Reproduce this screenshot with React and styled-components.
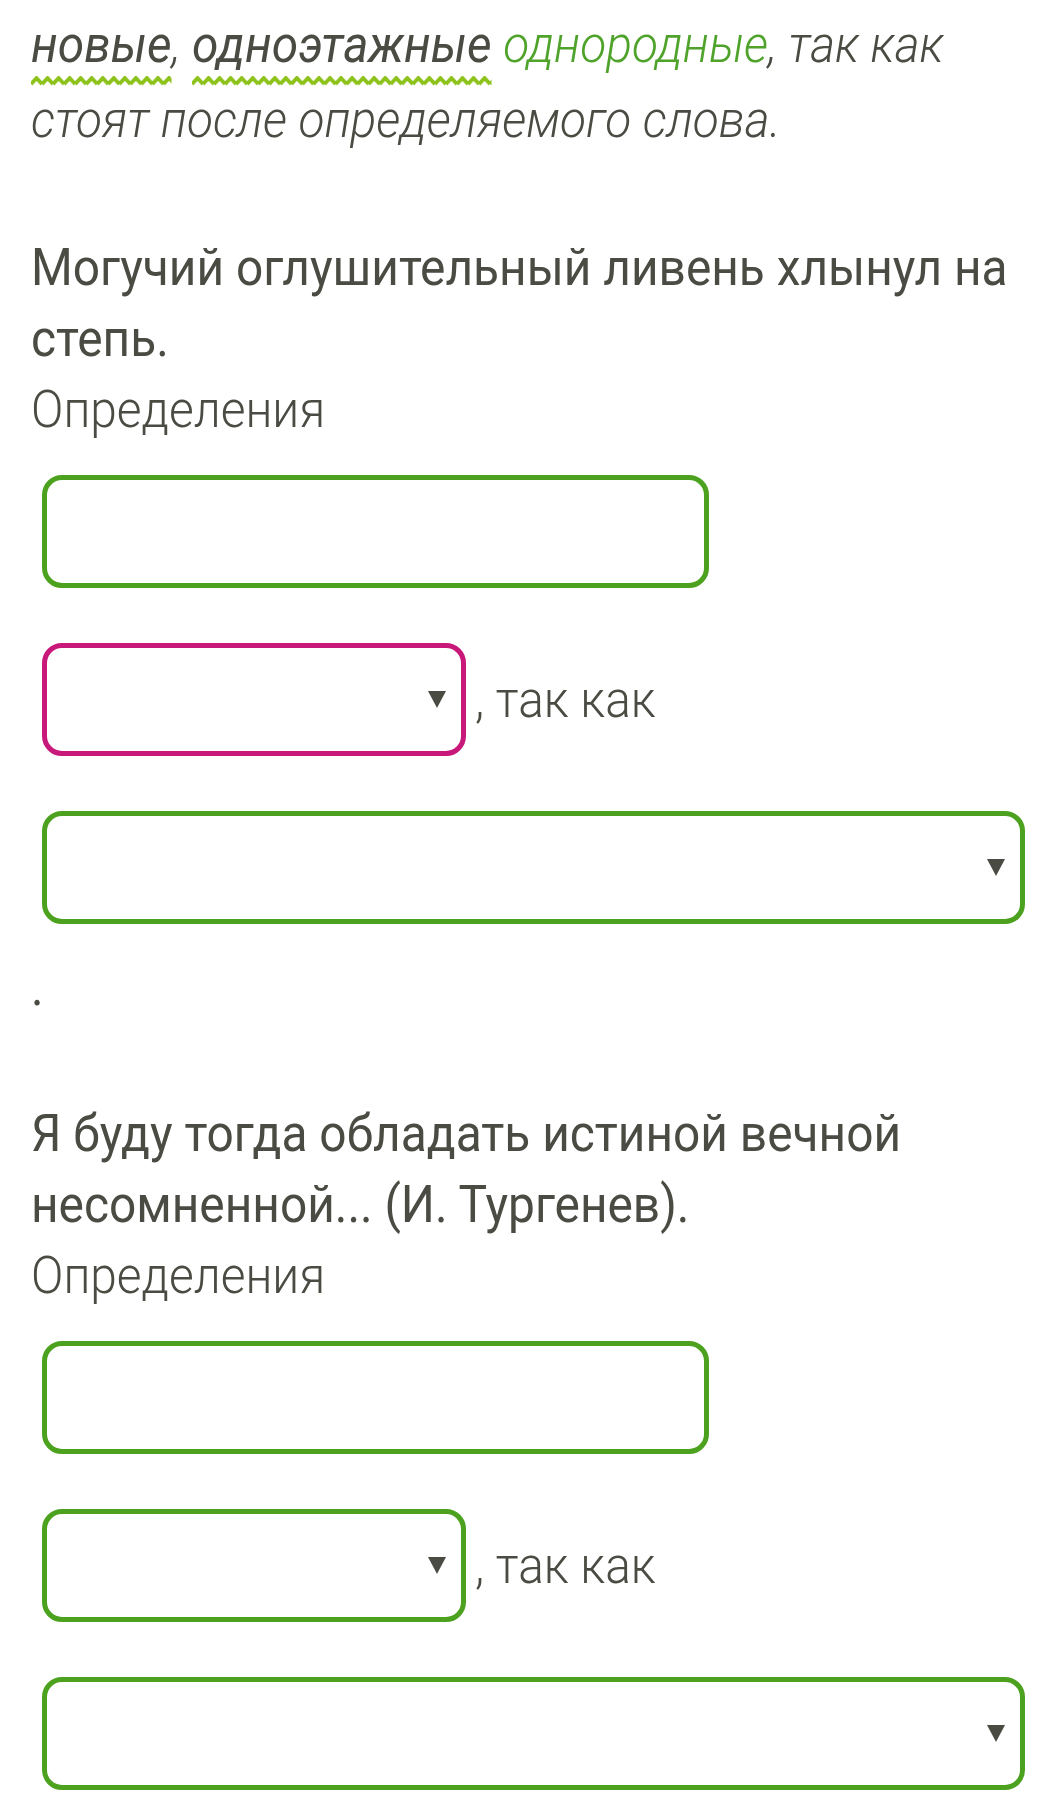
import React from 'react';
import styled, { createGlobalStyle, css } from 'styled-components';

// Roboto is squeezed a little to get the look of Roboto Condensed
const NARROW = 0.92;

const condensed = css`
  transform: scaleX(${NARROW});
  transform-origin: 0 0;
  white-space: nowrap;
`;

const GlobalStyle = createGlobalStyle`
  html, body {
    margin: 0;
    padding: 0;
    background: #fff;
    overflow-x: hidden;
  }
  body {
    font-family: Roboto, "Noto Sans", sans-serif;
    color: #4a4b42;
  }
`;

const questions = [
  {
    id: 1,
    lines: ['Могучий оглушительный ливень хлынул на', 'степь.'],
    invalid: true,
  },
  {
    id: 2,
    lines: ['Я буду тогда обладать истиной вечной', 'несомненной... (И. Тургенев).'],
    invalid: false,
  },
];

// word with the green zigzag underline
const Marked = ({ name, children }) => (
  <MarkedWord>
    {children}
    <Wave aria-hidden="true">
      <defs>
        <pattern id={`wave-${name}`} width="12" height="10" patternUnits="userSpaceOnUse">
          <polyline points="0,8 6,2 12,8" fill="none" stroke="#8cc21a" strokeWidth="4" />
        </pattern>
      </defs>
      <rect width="100%" height="10" fill={`url(#wave-${name})`} />
    </Wave>
  </MarkedWord>
);

const App = () => (
  <>
    <GlobalStyle />
    <Page>
      <Intro>
        <Marked name="a">новые</Marked>, <Marked name="b">одноэтажные</Marked>{' '}
        <Accent>однородные</Accent>, так как
        <br />
        стоят после определяемого слова.
      </Intro>

      {questions.map((q, i) => (
        <Block key={q.id}>
          <Heading>
            {q.lines[0]}
            <br />
            {q.lines[1]}
          </Heading>
          <Label>Определения</Label>
          <Fields>
            <TextField type="text" aria-label="Определения" />
            <Row>
              <Select $invalid={q.invalid}>
                <Arrow />
              </Select>
              <Because>, так как</Because>
            </Row>
            <Select $wide>
              <Arrow />
            </Select>
          </Fields>
          {i < questions.length - 1 && <Period>.</Period>}
        </Block>
      ))}
    </Page>
  </>
);

const Page = styled.main`
  box-sizing: border-box;
  width: 1064px;
  min-height: 1815px;
  padding: 7px 39px 0 31px;
  overflow: hidden;
`;

const Intro = styled.p`
  ${condensed}
  margin: 0;
  font-size: 52px;
  line-height: 75px;
  font-style: italic;
  font-weight: 300;
`;

const MarkedWord = styled.span`
  position: relative;
  font-weight: 400;
`;

const Wave = styled.svg`
  position: absolute;
  left: 0;
  top: calc(100% + 1px);
  width: 100%;
  height: 10px;
  overflow: hidden;
`;

const Accent = styled.span`
  color: #4fa32b;
`;

const Block = styled.section`
  margin-top: 75px;
  display: flex;
  flex-direction: column;
  align-items: flex-start;
`;

const Heading = styled.h3`
  ${condensed}
  margin: 0;
  font-size: 52px;
  line-height: 71px;
  font-weight: 400;
`;

const Label = styled.div`
  ${condensed}
  font-size: 52px;
  line-height: 72px;
  font-weight: 300;
`;

const Fields = styled.div`
  display: flex;
  flex-direction: column;
  gap: 55px;
  margin: 29px 0 0 11px;
`;

const TextField = styled.input`
  box-sizing: border-box;
  width: 667px;
  height: 113px;
  padding: 0 20px;
  border: 5px solid #4ca21f;
  border-radius: 20px;
  background: #fff;
  outline: none;
  font: inherit;
`;

const Row = styled.div`
  display: flex;
  align-items: center;
`;

const Select = styled.div`
  box-sizing: border-box;
  width: ${(p) => (p.$wide ? '983px' : '424px')};
  height: 113px;
  padding-right: 15px;
  border: 5px solid ${(p) => (p.$invalid ? '#c8187a' : '#4ca21f')};
  border-radius: 20px;
  display: flex;
  align-items: center;
  justify-content: flex-end;
`;

const Arrow = styled.span`
  width: 0;
  height: 0;
  border-left: 9px solid transparent;
  border-right: 9px solid transparent;
  border-top: 17px solid #4a4b42;
`;

const Because = styled.span`
  ${condensed}
  margin-left: 9px;
  font-size: 52px;
  line-height: 72px;
  font-weight: 300;
`;

const Period = styled.div`
  ${condensed}
  margin-top: 28px;
  font-size: 52px;
  line-height: 71px;
`;

export default App;
